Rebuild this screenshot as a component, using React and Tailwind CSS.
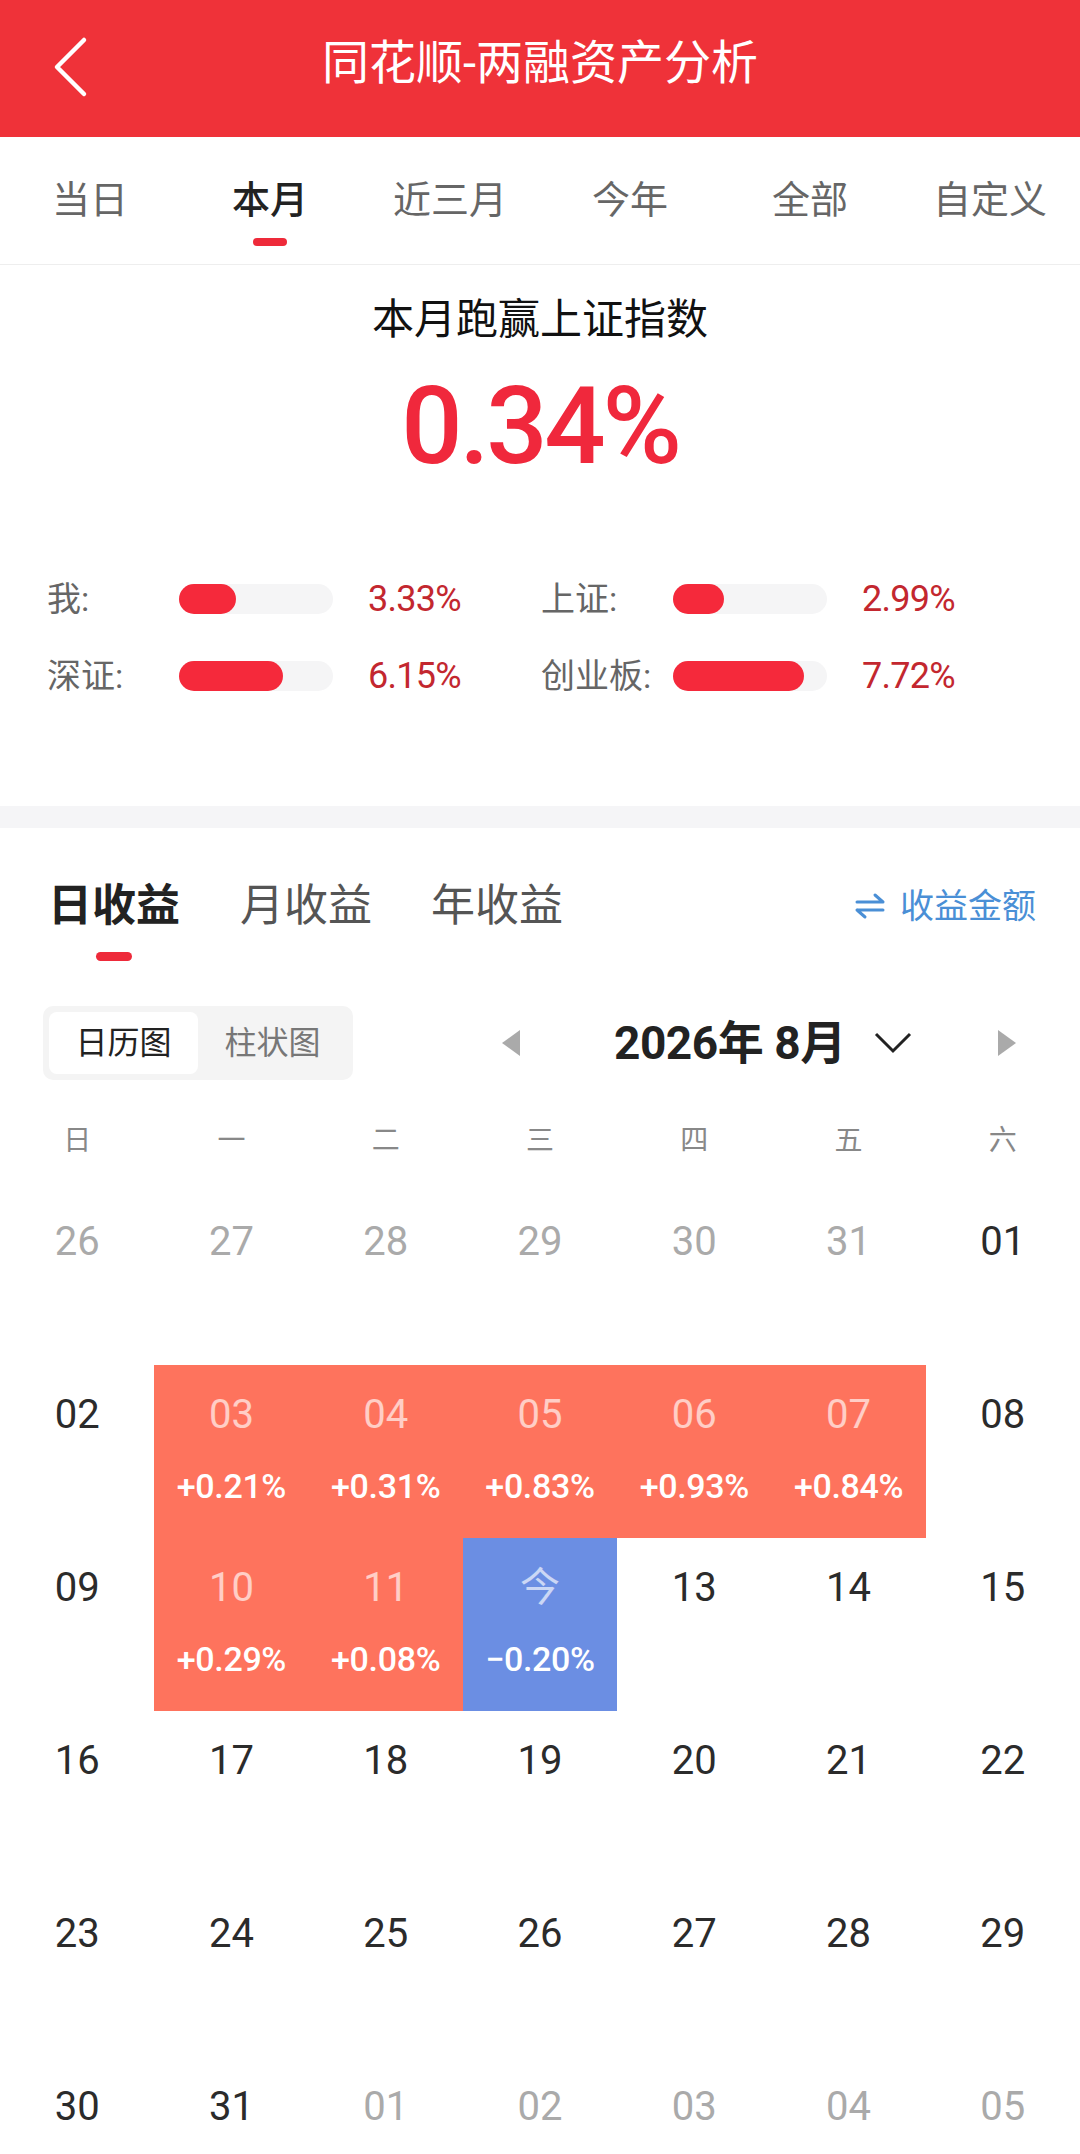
const tabs = ["当日", "本月", "近三月", "今年", "全部", "自定义"];

const stats = [
  { label: "我:", fill: 57, value: "3.33%" },
  { label: "上证:", fill: 51, value: "2.99%" },
  { label: "深证:", fill: 104, value: "6.15%" },
  { label: "创业板:", fill: 131, value: "7.72%" },
];

const weekdays = ["日", "一", "二", "三", "四", "五", "六"];

// kind: o = other month, n = normal, r = up day, b = today
const days = [
  ["26", "o"], ["27", "o"], ["28", "o"], ["29", "o"], ["30", "o"], ["31", "o"], ["01", "n"],
  ["02", "n"], ["03", "r", "+0.21%"], ["04", "r", "+0.31%"], ["05", "r", "+0.83%"], ["06", "r", "+0.93%"], ["07", "r", "+0.84%"], ["08", "n"],
  ["09", "n"], ["10", "r", "+0.29%"], ["11", "r", "+0.08%"], ["今", "b", "−0.20%"], ["13", "n"], ["14", "n"], ["15", "n"],
  ["16", "n"], ["17", "n"], ["18", "n"], ["19", "n"], ["20", "n"], ["21", "n"], ["22", "n"],
  ["23", "n"], ["24", "n"], ["25", "n"], ["26", "n"], ["27", "n"], ["28", "n"], ["29", "n"],
  ["30", "n"], ["31", "n"], ["01", "o"], ["02", "o"], ["03", "o"], ["04", "o"], ["05", "o"],
];

function DayCell({ day }) {
  const [num, kind, pct] = day;
  const bg = kind === "r" ? "bg-[#fe735d]" : kind === "b" ? "bg-[#6b8ee3]" : "bg-white";
  const numColor =
    kind === "o"
      ? "text-[#aaaaaa]"
      : kind === "n"
      ? "text-[#2b2b2b]"
      : "text-white/65";
  return (
    <div className={`h-[173px] flex flex-col items-center pt-[26px] ${bg}`}>
      <div className={`text-[40px] leading-[48px] ${numColor}`}>{num}</div>
      {pct && (
        <div className="mt-[27px] text-[34px] leading-[40px] font-medium text-white tracking-[-0.01em]">
          {pct}
        </div>
      )}
    </div>
  );
}

export default function App() {
  return (
    <div className="w-[1080px] bg-white font-[Roboto,'Noto_Sans_CJK_SC',sans-serif] overflow-hidden">
      {/* Header */}
      <div className="relative h-[137px] bg-[#ef3239] flex items-center justify-center pb-[12px]">
        <svg className="absolute left-[50px] top-[36px]" width="40" height="62" viewBox="0 0 40 62">
          <polyline points="34,4 7,31 34,58" fill="none" stroke="white" strokeWidth="4.5" strokeLinecap="round" strokeLinejoin="round" />
        </svg>
        <div className="text-white text-[47px] leading-[56px]">同花顺-两融资产分析</div>
      </div>

      {/* Period tabs */}
      <div className="h-[128px] grid grid-cols-6 border-b border-[#eeeeee]">
        {tabs.map((t, i) => (
          <div key={t} className="flex flex-col items-center pt-[41px]">
            <div className={`text-[38px] leading-[44px] ${i === 1 ? "text-[#222222] font-medium" : "text-[#666666]"}`}>{t}</div>
            {i === 1 && <div className="mt-[16px] w-[34px] h-[8px] rounded-full bg-[#ee2a3a]" />}
          </div>
        ))}
      </div>

      {/* Summary */}
      <div className="flex flex-col items-center pt-[30px] pb-[110px]">
        <div className="text-[42px] leading-[50px] text-[#111111]">本月跑赢上证指数</div>
        <div className="mt-[26px] text-[108px] leading-[110px] font-medium text-[#f0283c] tracking-[-0.03em]">0.34%</div>
        <div className="mt-[98px] w-full pl-[47px] grid grid-cols-[494px_494px] gap-y-[37px]">
          {stats.map((s) => (
            <div key={s.label} className="flex items-center h-[40px]">
              <div className="w-[132px] text-[34px] leading-[40px] text-[#666666]">{s.label}</div>
              <div className="w-[154px] h-[30px] rounded-full bg-[#f5f5f6]">
                <div className="h-full rounded-full bg-[#f5293b]" style={{ width: s.fill }} />
              </div>
              <div className="ml-[35px] text-[36px] leading-[40px] text-[#c3272f] tracking-[-0.02em]">{s.value}</div>
            </div>
          ))}
        </div>
      </div>

      <div className="h-[22px] bg-[#f5f5f7]" />

      {/* Profit tabs */}
      <div className="flex items-start pl-[48px] pr-[44px] pt-[52px]">
        <div className="flex flex-col items-center">
          <div className="text-[44px] leading-[52px] font-bold text-[#222222]">日收益</div>
          <div className="mt-[20px] w-[36px] h-[9px] rounded-full bg-[#ee2a3a]" />
        </div>
        <div className="ml-[60px] text-[44px] leading-[52px] text-[#555555]">月收益</div>
        <div className="ml-[59px] text-[44px] leading-[52px] text-[#555555]">年收益</div>
        <div className="ml-auto flex items-center h-[52px] text-[34px] text-[#4a8fd6]">
          <svg width="32" height="28" viewBox="0 0 32 28" className="mr-[14px]">
            <path d="M3 10 H29 M21 3 L29 10" fill="none" stroke="#4a8fd6" strokeWidth="3" strokeLinecap="round" />
            <path d="M29 18 H3 M11 25 L3 18" fill="none" stroke="#4a8fd6" strokeWidth="3" strokeLinecap="round" />
          </svg>
          收益金额
        </div>
      </div>

      {/* View switch + month nav */}
      <div className="flex items-center pl-[43px] mt-[45px]">
        <div className="w-[310px] h-[74px] rounded-[10px] bg-[#f4f4f4] p-[6px] grid grid-cols-2">
          <div className="rounded-[8px] bg-white flex items-center justify-center text-[32px] text-[#222222]">日历图</div>
          <div className="flex items-center justify-center text-[32px] text-[#777777]">柱状图</div>
        </div>
        <svg className="ml-[149px]" width="18" height="26" viewBox="0 0 18 26">
          <polygon points="18,0 0,13 18,26" fill="#aaaaaa" />
        </svg>
        <div className="ml-[94px] text-[46px] leading-[52px] font-bold text-[#222222] tracking-[-0.01em]">2026年 8月</div>
        <svg className="ml-[28px]" width="38" height="22" viewBox="0 0 38 22">
          <polyline points="2,2 19,19 36,2" fill="none" stroke="#222222" strokeWidth="3" />
        </svg>
        <svg className="ml-[86px]" width="18" height="26" viewBox="0 0 18 26">
          <polygon points="0,0 18,13 0,26" fill="#aaaaaa" />
        </svg>
      </div>

      {/* Weekdays */}
      <div className="grid grid-cols-7 h-[112px] pt-[45px]">
        {weekdays.map((w) => (
          <div key={w} className="text-center text-[28px] leading-[32px] text-[#888888]">{w}</div>
        ))}
      </div>

      {/* Calendar */}
      <div className="grid grid-cols-7">
        {days.map((d, i) => (
          <DayCell key={i} day={d} />
        ))}
      </div>
    </div>
  );
}
